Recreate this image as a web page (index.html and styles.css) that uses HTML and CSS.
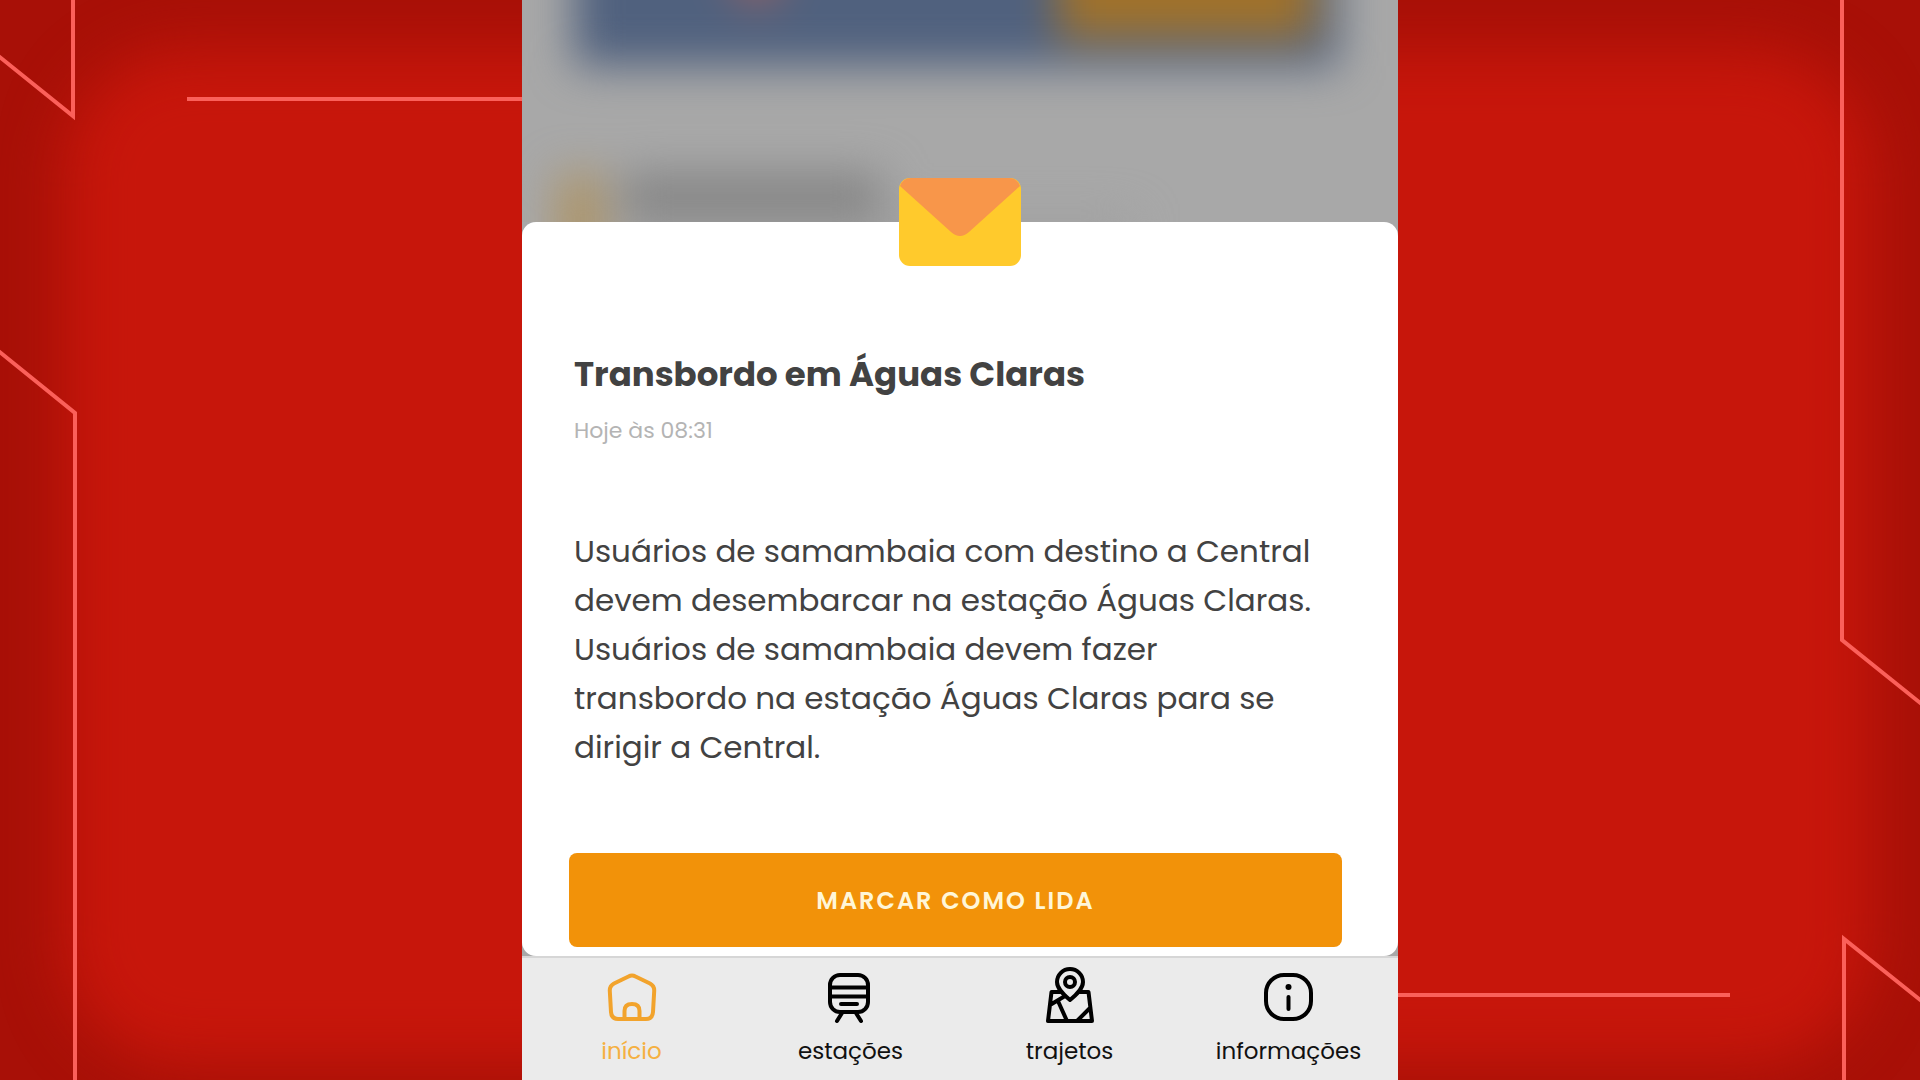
FILE: index.html
```html
<!DOCTYPE html>
<html lang="pt-BR">
<head>
    <meta charset="UTF-8">
    <meta name="viewport" content="width=device-width, initial-scale=1.0">
    <title>Transbordo em Águas Claras</title>
    <link rel="stylesheet" href="styles.css">
</head>
<body>
    <!-- Background -->
    <svg class="backdrop" viewBox="0 0 1920 1080" preserveAspectRatio="none" aria-hidden="true">
        <defs>
            <filter id="soften" x="-10%" y="-15%" width="120%" height="130%" color-interpolation-filters="sRGB">
                <feGaussianBlur stdDeviation="30"/>
            </filter>
        </defs>
        <rect width="1920" height="1080" fill="#a81007"/>
        <rect x="64" y="50" width="1806" height="1014" rx="120" fill="#c7160b" filter="url(#soften)"/>
        <g fill="none" stroke="#fb605a" stroke-width="4">
            <path d="M-4 54L73 116V-4"/>
            <path d="M-4 349L75 413V1084"/>
            <path d="M187 99H540"/>
            <path d="M1842 -4V640L1924 706"/>
            <path d="M1924 1003L1844 939V1084"/>
            <path d="M1380 995H1730"/>
        </g>
    </svg>

    <div class="phone">
        <!-- Page behind the sheet -->
        <div class="behind" aria-hidden="true">
            <div class="blurred">
                <div class="banner">
                    <div class="banner-dot"></div>
                    <div class="banner-button"></div>
                </div>
                <div class="item">
                    <div class="item-icon"></div>
                    <div class="item-text">
                        <div class="item-title"></div>
                        <div class="item-line"></div>
                    </div>
                </div>
            </div>
        </div>

        <!-- Message -->
        <main class="sheet">
            <svg class="envelope" viewBox="0 0 122 88" aria-hidden="true">
                <rect width="122" height="88" rx="11" fill="#ffca2c"/>
                <path d="M1 8Q4 0 12 0H110Q118 0 121 8L70 54Q61 62 52 54Z" fill="#f8964a"/>
            </svg>
            <div class="message">
                <h1>Transbordo em Águas Claras</h1>
                <p class="date">Hoje às 08:31</p>
                <p class="text">Usuários de samambaia com destino a Central devem desembarcar na estação Águas Claras. Usuários de samambaia devem fazer transbordo na estação Águas Claras para se dirigir a Central.</p>
            </div>
            <button class="btn" type="button">MARCAR COMO LIDA</button>
        </main>

        <!-- Bottom menu -->
        <nav class="menu">
            <a href="#" class="active">
                <svg viewBox="0 0 56 60" aria-hidden="true">
                    <path d="M24.500 10.500Q28 8.500 31.500 10.500L46 17.500Q50.500 20 50.200 25L49 46Q48.500 53 42 53H14Q7.500 53 7 46L5.800 25Q5.500 20 10 17.500Z"/>
                    <path d="M20.500 53V45Q20.500 38 28 38T35.500 45V53"/>
                </svg>
                <span>início</span>
            </a>
            <a href="#">
                <svg viewBox="0 0 56 60" aria-hidden="true">
                    <rect x="7" y="9" width="38" height="37" rx="10"/>
                    <path d="M7 21.500H45M7 30.500H45M18 38H34M19 47L14 55M33 47L38 55"/>
                </svg>
                <span>estações</span>
            </a>
            <a href="#">
                <svg viewBox="0 0 56 60" aria-hidden="true">
                    <path d="M28 34C22 29 15 23 15 16A13 13 0 0 1 41 16C41 23 34 29 28 34Z"/>
                    <circle cx="28" cy="16" r="5"/>
                    <path d="M18 26H9.500L6 55H50L46.500 26H38M8 39L23 30M16 35L25 55M35 55L48 42"/>
                </svg>
                <span>trajetos</span>
            </a>
            <a href="#">
                <svg viewBox="0 0 56 60" aria-hidden="true">
                    <rect x="5" y="9" width="45" height="44" rx="18"/>
                    <path d="M27.500 31V43"/>
                    <circle class="dot" cx="27.500" cy="21" r="3"/>
                </svg>
                <span>informações</span>
            </a>
        </nav>
    </div>
</body>
</html>
```

FILE: styles.css
```css
* {
    box-sizing: border-box;
}

body {
    margin: 0;
    background: #c7160b;
    font-family: Poppins, Inter, "Liberation Sans", sans-serif;
    color: #424242;
}

h1, p {
    margin: 0;
}

/* Background */
.backdrop {
    position: fixed;
    top: 0;
    left: 0;
    width: 100%;
    height: 100%;
    z-index: -1;
}

.phone {
    display: flex;
    flex-direction: column;
    width: 100%;
    max-width: 876px;
    min-height: 100vh;
    margin: 0 auto;
    background: #a8a8a8;
}

/* Page behind the sheet */
.behind {
    height: 222px;
    overflow: hidden;
}

.blurred {
    padding: 0 60px 0 36px;
    filter: blur(22px);
}

.banner {
    display: flex;
    justify-content: space-between;
    height: 126px;
    margin: -60px 0 108px 16px;
    padding: 0 24px 28px 160px;
    background: #50617e;
}

.banner-dot {
    width: 46px;
    height: 62px;
    border-radius: 50%;
    background: #a5625c;
}

.banner-button {
    width: 256px;
    background: #a1722a;
}

.item {
    display: flex;
    gap: 20px;
}

.item-icon {
    width: 44px;
    height: 90px;
    background: #ad9364;
}

.item-text {
    flex: 1;
}

.item-title {
    width: 260px;
    height: 44px;
    background: #848484;
}

.item-line {
    width: 510px;
    height: 30px;
    background: #9f9f9f;
}

/* Message */
.sheet {
    position: relative;
    flex: 1;
    display: flex;
    flex-direction: column;
    justify-content: space-between;
    padding: 128px 56px 9px 47px;
    border-radius: 14px;
    background: #fff;
}

.envelope {
    position: absolute;
    top: -44px;
    left: 50%;
    width: 122px;
    height: 88px;
    margin-left: -61px;
}

.message {
    padding: 0 5px;
}

h1 {
    font-size: 34px;
    line-height: 49px;
    font-weight: 700;
}

.date {
    margin-top: 18px;
    font-size: 22px;
    line-height: 28px;
    color: #b4b4b4;
}

.text {
    margin-top: 82px;
    font-size: 31px;
    line-height: 49px;
}

.btn {
    height: 94px;
    border: none;
    border-radius: 8px;
    background: #f29209;
    color: #fff6d8;
    font-family: inherit;
    font-size: 24px;
    font-weight: 600;
    letter-spacing: 2px;
    cursor: pointer;
}

/* Bottom menu */
.menu {
    display: flex;
    height: 124px;
    border-top: 2px solid #d6d6d6;
    background: #ebebeb;
}

.menu a {
    flex: 1;
    display: flex;
    flex-direction: column;
    align-items: center;
    gap: 11px;
    padding-top: 8px;
    color: #111;
    font-size: 23px;
    line-height: 28px;
    text-decoration: none;
}

.menu a.active {
    color: #f5b041;
}

.menu svg {
    width: 56px;
    height: 60px;
    fill: none;
    stroke: #000;
    stroke-width: 4;
    stroke-linecap: round;
    stroke-linejoin: round;
}

.menu .active svg {
    stroke: #f2a32c;
}

.menu .dot {
    fill: #000;
    stroke: none;
}
```
